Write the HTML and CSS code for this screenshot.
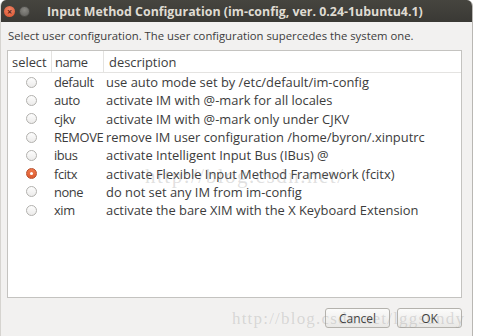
FILE: index.html
```html
<!DOCTYPE html>
<html lang="en">
<head>
  <meta charset="UTF-8" />
  <title>Input Method Configuration</title>
  <link rel="stylesheet" href="styles.css">
</head>
<body>
  <div class="window">
    <div class="titlebar">
      <span class="wbtn close">&#215;</span>
      <span class="wbtn min"></span>
      <span class="title">Input Method Configuration (im-config, ver. 0.24-1ubuntu4.1)</span>
    </div>
    <div class="content">
      <p class="intro">Select user configuration. The user configuration supercedes the system one.</p>
      <div class="list">
        <div class="row head">
          <span class="c-sel">select</span>
          <span class="c-name">name</span>
          <span class="c-desc">description</span>
        </div>
        <div class="row"><span class="c-sel"><i class="radio"></i></span><span class="c-name">default</span><span class="c-desc">use auto mode set by /etc/default/im-config</span></div>
        <div class="row"><span class="c-sel"><i class="radio"></i></span><span class="c-name">auto</span><span class="c-desc">activate IM with @-mark for all locales</span></div>
        <div class="row"><span class="c-sel"><i class="radio"></i></span><span class="c-name">cjkv</span><span class="c-desc">activate IM with @-mark only under CJKV</span></div>
        <div class="row"><span class="c-sel"><i class="radio"></i></span><span class="c-name">REMOVE</span><span class="c-desc">remove IM user configuration /home/byron/.xinputrc</span></div>
        <div class="row"><span class="c-sel"><i class="radio"></i></span><span class="c-name">ibus</span><span class="c-desc">activate Intelligent Input Bus (IBus) @</span></div>
        <div class="row"><span class="c-sel"><i class="radio on"></i></span><span class="c-name">fcitx</span><span class="c-desc">activate Flexible Input Method Framework (fcitx)</span></div>
        <div class="row"><span class="c-sel"><i class="radio"></i></span><span class="c-name">none</span><span class="c-desc">do not set any IM from im-config</span></div>
        <div class="row"><span class="c-sel"><i class="radio"></i></span><span class="c-name">xim</span><span class="c-desc">activate the bare XIM with the X Keyboard Extension</span></div>
      </div>
      <div class="actions">
        <button class="btn">Cancel</button>
        <button class="btn">OK</button>
      </div>
    </div>
  </div>
  <div class="mark mark-mid">http://blog.csdn.net/</div>
  <div class="mark mark-bottom">http://blog.csdn.net/lggsundy</div>
</body>
</html>
```

FILE: styles.css
```css
* { box-sizing: border-box; margin: 0; padding: 0; }
body { background: #fff; font-family: 'Open Sans', sans-serif; color: #3c3c3c; position: relative; height: 336px; overflow: hidden; }

.window {
  width: 473px;
  height: 336px;
  background: #f2f1f0;
  border-right: 1px solid #b9b7b3;
  border-left: 1px solid #d6d4d0;
  border-radius: 6px 6px 0 0;
  overflow: hidden;
}
.titlebar {
  height: 22px;
  background: linear-gradient(#46453f, #3a3935);
  display: flex;
  align-items: center;
  padding-left: 3px;
}
.wbtn {
  width: 11px;
  height: 11px;
  border-radius: 50%;
  margin-right: 4px;
  font-size: 9px;
  line-height: 11px;
  text-align: center;
  font-weight: bold;
}
.close { background: radial-gradient(circle at 50% 35%, #f0866a, #d9502a); color: #5b2314; }
.min { background: radial-gradient(circle at 50% 35%, #8a8984, #5f5e5a); border: 1px solid #4d4c48; }
.title {
  margin-left: 13px;
  color: #dfdbd2;
  font-weight: bold;
  font-size: 12.4px;
  white-space: nowrap;
}

.content { padding: 0 10px 0 6px; }
.intro { font-size: 11.3px; line-height: 28px; height: 28px; white-space: nowrap; padding-left: 1px; }

.list {
  height: 248px;
  background: #fff;
  border: 1px solid #c4c3c0;
  font-size: 12.9px;
}
.row { display: flex; height: 18.3px; align-items: center; white-space: nowrap; }
.row.head { height: 22px; border-bottom: 1px solid #e4e3e1; }
.c-sel { width: 43px; padding-left: 4px; display: flex; justify-content: center; }
.c-name { width: 52px; padding-left: 3px; letter-spacing: -0.4px; }
.c-desc { padding-left: 3px; }
.head .c-sel { justify-content: flex-start; }
.head .c-name, .head .c-desc { border-left: 1px solid #e4e3e1; height: 22px; line-height: 22px; }
.head .c-name { padding-left: 3px; }
.head .c-desc { padding-left: 5px; }

.radio {
  width: 11px;
  height: 11px;
  border-radius: 50%;
  border: 1px solid #b2b1ae;
  background: linear-gradient(#fdfdfd, #ecebea);
  position: relative;
}
.radio.on { border-color: #b8502c; background: linear-gradient(#f07a4e, #dd5a2e); }
.radio.on::after {
  content: "";
  position: absolute;
  width: 3px;
  height: 3px;
  border-radius: 50%;
  background: #fff;
  left: 3px;
  top: 3px;
}

.actions { display: flex; justify-content: flex-end; gap: 7px; margin-top: 10px; }
.btn {
  width: 65px;
  height: 20px;
  font-family: 'Open Sans', sans-serif;
  font-size: 12px;
  color: #3c3c3c;
  border: 1px solid #b4b2ad;
  border-radius: 3px;
  background: linear-gradient(#fbfbfa, #e9e8e6);
}

.mark { position: absolute; font-family: 'Liberation Serif', serif; color: rgba(150, 150, 150, 0.3); white-space: nowrap; }
.mark-mid { left: 145px; top: 164px; font-size: 21px; letter-spacing: 1.5px; }
.mark-bottom { left: 232px; top: 309px; font-size: 17px; letter-spacing: 1.2px; }
```
